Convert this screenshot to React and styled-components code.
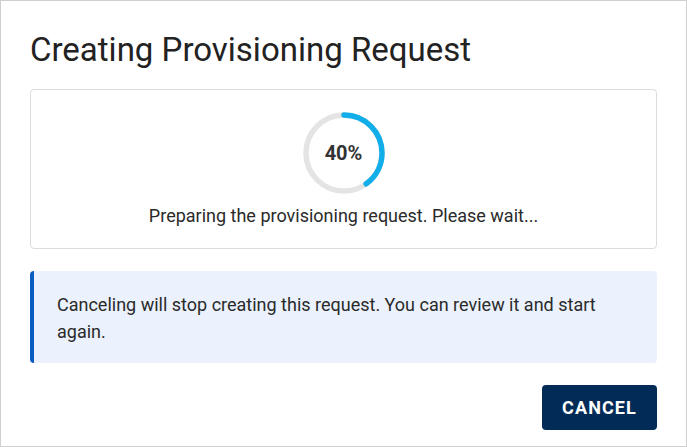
import React from "react";
import styled, { createGlobalStyle } from "styled-components";

const GlobalStyle = createGlobalStyle`
  html, body {
    margin: 0;
    padding: 0;
    background: #ffffff;
  }
  body {
    font-family: Roboto, "Liberation Sans", Arial, sans-serif;
    color: #212121;
  }
`;

const Dialog = styled.div`
  box-sizing: border-box;
  width: 687px;
  height: 447px;
  border: 1px solid #cfcfcf;
  padding: 29px 29px 16px 29px;
  display: flex;
  flex-direction: column;
  background: #fff;
`;

const Title = styled.h1`
  margin: 0;
  font-size: 33px;
  line-height: 40px;
  font-weight: 400;
  color: #222;
`;

const Card = styled.div`
  margin-top: 19px;
  border: 1px solid #dcdcdc;
  border-radius: 4px;
  padding: 22px 20px 19px;
  display: flex;
  flex-direction: column;
  align-items: center;
`;

const Ring = styled.div`
  display: grid;
  width: 82px;
  height: 82px;
  > * {
    grid-area: 1 / 1;
  }
`;

const Percent = styled.span`
  align-self: center;
  justify-self: center;
  font-size: 20px;
  font-weight: 700;
  color: #333;
`;

const Status = styled.p`
  margin: 8px 0 0;
  font-size: 18px;
  line-height: 27px;
  color: #2a2a2a;
`;

const Alert = styled.div`
  margin-top: 22px;
  background: #ebf2fd;
  border-left: 4px solid #0b5cbe;
  border-radius: 4px;
  padding: 20px 24px 18px 23px;
  font-size: 18px;
  line-height: 27px;
  color: #2a2a2a;
`;

const Actions = styled.div`
  margin-top: 22px;
  display: flex;
  justify-content: flex-end;
`;

const Button = styled.button`
  width: 115px;
  height: 45px;
  border: none;
  border-radius: 4px;
  background: #022b58;
  color: #fff;
  font-family: Roboto, "Liberation Sans", Arial, sans-serif;
  font-size: 18px;
  font-weight: 700;
  letter-spacing: 1.1px;
  cursor: pointer;
`;

const ProgressRing = ({ value }) => {
  const r = 38;
  const c = 2 * Math.PI * r;
  return (
    <Ring>
      <svg width="82" height="82" viewBox="0 0 82 82">
        <circle cx="41" cy="41" r={r} fill="none" stroke="#e4e4e4" strokeWidth="5.5" />
        <circle
          cx="41"
          cy="41"
          r={r}
          fill="none"
          stroke="#12aee9"
          strokeWidth="5.5"
          strokeLinecap="round"
          strokeDasharray={`${(c * value) / 100} ${c}`}
          transform="rotate(-90 41 41)"
        />
      </svg>
      <Percent>{value}%</Percent>
    </Ring>
  );
};

export default function App() {
  return (
    <>
      <GlobalStyle />
      <Dialog>
        <Title>Creating Provisioning Request</Title>
        <Card>
          <ProgressRing value={40} />
          <Status>Preparing the provisioning request. Please wait...</Status>
        </Card>
        <Alert>
          Canceling will stop creating this request. You can review it and start again.
        </Alert>
        <Actions>
          <Button>CANCEL</Button>
        </Actions>
      </Dialog>
    </>
  );
}
